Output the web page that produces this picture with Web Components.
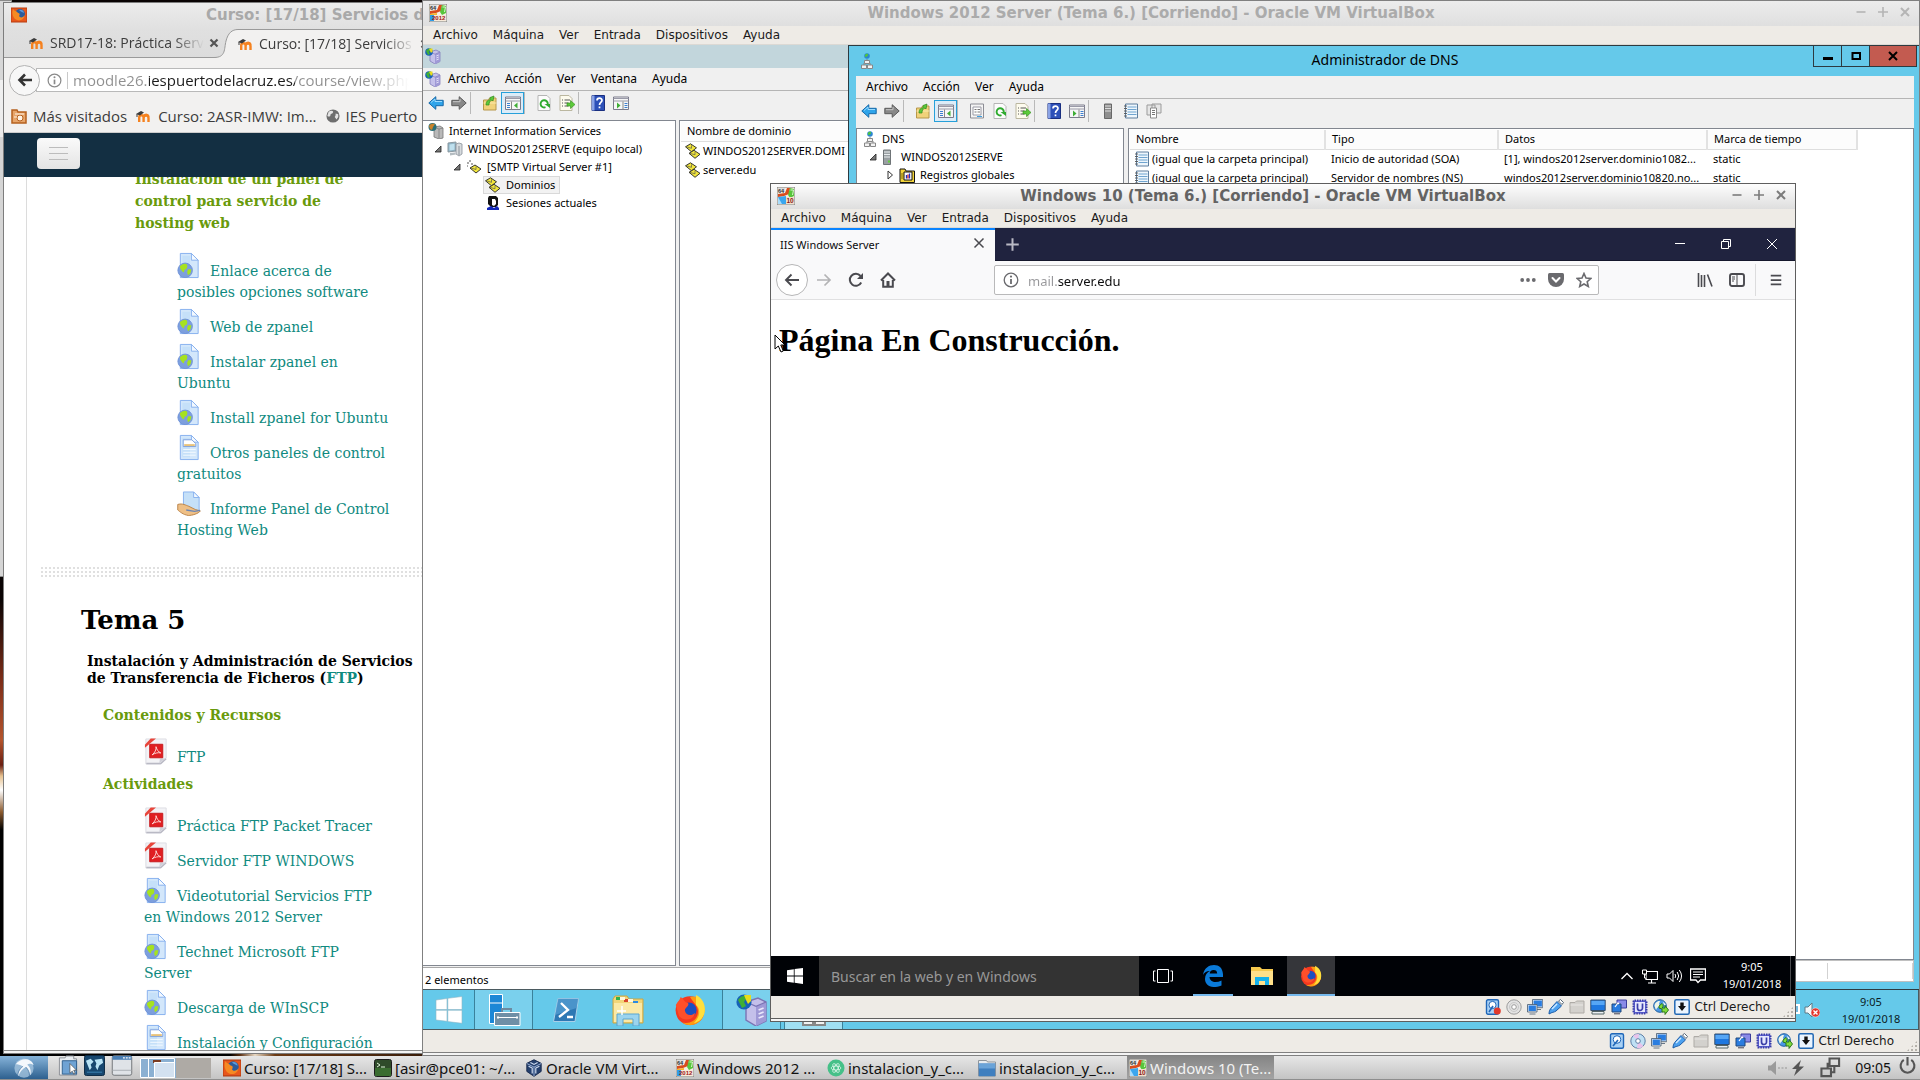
<!DOCTYPE html>
<html lang="es">
<head>
<meta charset="utf-8">
<title>Escritorio</title>
<style>
html,body{margin:0;height:100%;overflow:hidden;background:#000}
</style>
</head>
<body>
<host-desktop></host-desktop>
<script>
const BASE = `
*{box-sizing:border-box}
button{font:inherit;color:inherit;background:none;border:0;padding:0;margin:0;white-space:nowrap;text-align:left;flex:none}
input{font:inherit;border:0;padding:0;margin:0;background:none;outline:0;min-width:0}
ul{list-style:none;margin:0;padding:0}
svg{display:block}
`;
const define = (name, css, render) => customElements.define(name, class extends HTMLElement {
  connectedCallback() {
    if (this.shadowRoot) return;
    this.attachShadow({ mode: 'open' }).innerHTML = `<style>${BASE}${css}</style>${typeof render === 'function' ? render(this) : render}`;
  }
});

/* ---------- icons ---------- */
const doc = `<path d="M3 1.500h11.500l7 7V26.500H3z" fill="#d3e7fb" stroke="#86b0ee"/><path d="M5 4h8v20H5z" fill="#bcdcf8" opacity=".6"/><path d="M14.500 1.500v7h7z" fill="#f3f9ff" stroke="#86b0ee"/>`;
const envelope = (x, y) => `<g transform="translate(${x} ${y})"><path d="M0 3L5 0l6 4-5 4z" fill="#f2e63c" stroke="#222" stroke-width=".9"/><path d="M1 3l5 1.500 0-3" fill="none" stroke="#555" stroke-width=".7"/></g>`;
const firefoxNew = `<circle cx="8" cy="8.300" r="7.200" fill="#f5381f"/><path d="M8 1.500c5-1.500 7.500 3 7.200 7A7.200 7.200 0 0 1 4 14.300c5 1 8-2 8-5.500 0-3-2-4-4-7.300z" fill="#ff9a12"/><path d="M11 .5c4 2 5 6 4.200 9.300C14 13 12 14 10 14.500c3-3 3.500-7 1-9z" fill="#ffdf3d"/><circle cx="7.500" cy="8" r="3.800" fill="#1c4fc0"/><path d="M.9 5.500C2 3.500 3 3 3.300 1.500 5 2.500 5 4 7 4.500 8 6 5 7 5.500 8.500 6 11 9 11 10.500 9.500 10 13 5 14 2.500 11z" fill="#ff4f2a"/>`;
const vbBase = `<path d="M0 0h18v18H0z" fill="#f4efe4" stroke="#777"/><path d="M10 1l3 0-1 6-5 2-6 1V7l7-1z" fill="#d94c1e"/><path d="M13 1l4 1v7l-4 2-2-3z" fill="#58c53c"/><path d="M13.500 3l3 0-1 5" fill="none" stroke="#d9f5cf"/><path d="M1 1h7v4H1z" fill="#ddd"/><text x="1" y="5.500" font-size="5.500" font-weight="700" font-family="Liberation Sans" fill="#333">64</text>`;
const ICONS = {
  globeDoc: ['0 0 24 28', doc + `<circle cx="8" cy="19" r="7.500" fill="#7d9fdd" stroke="#6f93d8"/><path d="M5 13c4-2 6 0 5 3s-3 1-3 4-3-1-4-3 0-3 2-4zM11 18l3.500 0-1 4-2.500 2-1-3z" fill="#a6e21f"/>`],
  pageDoc: ['0 0 24 28', doc + `<path d="M6 6h9l4 4v3H6z" fill="#fff" stroke="#7d9fdd"/><path d="M7 11.500h11" stroke="#e8c27a" stroke-width="2"/><path d="M6 16h13M6 19h13M6 22h13" stroke="#f4faff"/>`],
  handDoc: ['0 0 26 28', `<path d="M7 1.500h11l6 6V22H7z" fill="#c5e0f8" stroke="#86b0ee"/><path d="M18 1.500v6h6z" fill="#f3f9ff" stroke="#86b0ee"/><path d="M.8 15c5-1.500 9 1 12 2l7 3.500 5.500 1.500c-2 3-9 5-13 5-6-1-9-4-11.500-6z" fill="#eebf86" stroke="#b98145"/><path d="M10 21l9 1.500 6-1" fill="none" stroke="#6b86b5" stroke-width="1.500"/>`],
  pdf: ['0 0 24 28', `<path d="M1.500 1h21v20l-6 6h-15z" fill="#f3f3f6" stroke="#dcdce2"/><path d="M2 26.500h15l5.500-5" fill="none" stroke="#b9b9c4" stroke-width="1.500"/><path d="M22 21l-6 .5-.5 5z" fill="#cfcfd8"/><path d="M.5 10V7L6.500.5H12z" fill="#e8453a"/><path d="M5.500 6.500h13.500v14H5.500z" fill="#e01f22" stroke="#c7191c"/><path d="M8 17.500c3-2.500 4.500-5.500 4-8.500 1 3.500 2.500 5.500 5 6.500-3-.6-6 0-9 2z" fill="none" stroke="#ffe9e6" stroke-width=".9"/>`],
  ffOld: ['0 0 16 16', `<path d="M0 1h16v14H0z" fill="#e8571c"/><path d="M0 1h16v14H0z" fill="none" stroke="#b83c10"/><circle cx="9" cy="7" r="5" fill="#2c5c9c"/><path d="M2 2c1 2 4 2 5 4 2 0 2 2 1 3 1 2 4 2 6-1-1 5-6 7-10 4C1 9 1 5 2 2z" fill="#f58a23"/><path d="M8 3c3-1 5 1 5 3-1-1-3-1-5-3z" fill="#5d9ad8"/>`],
  moodle: ['0 0 16 12', `<path d="M3.200 12V7.500a2.200 2.200 0 0 1 4.400 0V12M7.600 8a2.200 2.200 0 0 1 4.900 0v4" fill="none" stroke="#f58220" stroke-width="2.400"/><path d="M7.600 6.500a2.600 2.600 0 0 1 5 0" fill="none" stroke="#f58220" stroke-width="2.200"/><path d="M0 4l5-3 3 1.500-4 3z" fill="#3b3b3b"/><path d="M1 4v3" stroke="#3b3b3b"/>`],
  folderFf: ['0 0 16 16', `<path d="M1 2h5l1 2h8v11H1z" fill="#e7a56a" stroke="#b5601e" stroke-width="1.500"/><circle cx="9" cy="10" r="3" fill="#fff3e4" stroke="#b5601e"/><path d="M4 6h9M3 9h3" stroke="#fff3e4"/>`],
  globeGray: ['0 0 16 16', `<circle cx="8" cy="8" r="7.500" fill="#6e6e6e"/><path d="M3 3c3-2 6-1 5 1S5 5 5 7 3 9 1.500 8zM11 5l3 1 0 3-2 3-2-3 1-2z" fill="#e4e4e4"/>`],
  info: ['0 0 16 16', `<circle cx="8" cy="8" r="6.800" fill="none" stroke="currentColor" stroke-width="1.300"/><path d="M8 7v5" stroke="currentColor" stroke-width="1.800"/><circle cx="8" cy="4.600" r="1.100" fill="currentColor"/>`],
  xBold: ['0 0 10 10', `<path d="M1.500 1.500l7 7M8.500 1.500l-7 7" stroke="currentColor" stroke-width="2.200"/>`],
  backBold: ['0 0 16 16', `<path d="M15 8H3M8 2.500L2.500 8 8 13.500" fill="none" stroke="#333" stroke-width="2.600"/>`],
  vb2012: ['0 0 18 18', vbBase + `<path d="M1 10l7-1v3H1z" fill="#f7b52a"/><path d="M1 11h4v6H1z" fill="#2f9de8"/><path d="M5 11h12v6H5z" fill="#f7ead9"/><text x="3" y="16" font-size="6" font-weight="700" font-family="Liberation Sans" fill="#a01818">2012</text>`],
  vb10: ['0 0 18 18', vbBase + `<path d="M1 10l8-1v8H1z" fill="#3aa6ee"/><path d="M1 10l4 7H1z" fill="#a9dcfb"/><path d="M9 10h8v7H9z" fill="#f3dfc9"/><text x="9.500" y="16" font-size="6.500" font-weight="700" font-family="Liberation Sans" fill="#8a1c1c">10</text>`],
  iis: ['0 0 16 16', `<path d="M5 4l6-2 4 2v9.500L10 16l-5-3z" fill="#c4c0ea" stroke="#7a74b4" stroke-width=".7"/><path d="M10 6.200l5-2v9.300L10 16z" fill="#9f99d6"/><path d="M5 4l5 2.200 5-2.200" stroke="#7a74b4" stroke-width=".6" fill="none"/><path d="M11.300 8l2.500-1M11.300 10l2.500-1M11.300 12l2.500-1" stroke="#e9e7fb" stroke-width=".9"/><circle cx="4" cy="4" r="3.800" fill="#1762b8"/><path d="M1 3c2-3 4-2 5-2L4 4l1 2-2 1z" fill="#3fae35"/><path d="M4 .5h3.500v3L6 5 5 3z" fill="#e8dc1c"/>`],
  iisRoot: ['0 0 16 16', `<path d="M6 4l6-1 3 2v10l-4 1-5-2z" fill="#b9b9b9" stroke="#777" stroke-width=".8"/><path d="M11 6v9.500M11 6l4-1M11 6L6 4" stroke="#777" fill="none" stroke-width=".7"/><circle cx="4.500" cy="4" r="4" fill="#2b6f77"/><path d="M1 3c2-3 4-2 6-2L5 4l-1 3-2-1z" fill="#c9832b"/>`],
  computer: ['0 0 16 16', `<path d="M1 2l8-1v9l-8 1z" fill="#8fb4c6" stroke="#8a98a0"/><path d="M2.500 3.500l5-.7v6l-5 .7z" fill="#bfe0ee"/><path d="M9 3l3-1 3 1v10l-3 2-3-2z" fill="#d7dbde" stroke="#899199" stroke-width=".8"/><path d="M12 5v9" stroke="#899199"/><path d="M3 12l5-.5 1 2-6 1z" fill="#b4bcc1"/>`],
  smtp: ['0 0 16 16', envelope(4, 6) + `<path d="M1 4h2M3 2h2M5 5h2M1 7h1" stroke="#555"/>`],
  domains: ['0 0 16 16', envelope(0.5, 0.8) + envelope(4, 7.300)],
  user: ['0 0 14 16', `<path d="M3 1h7l2 2v7l-2 2H5L2 9V3z" fill="#111"/><path d="M6 4h3l1 2v3l-2 2-2-1z" fill="#fff"/><path d="M1 13l4-2 3 2 3-2 2 2v2H1z" fill="#1227b8"/>`],
  open: ['0 0 8 8', `<path d="M7 1v6H1z" fill="#777" stroke="#222" stroke-width=".8"/>`],
  closed: ['0 0 8 10', `<path d="M2 1l4.500 4L2 9z" fill="#fff" stroke="#333"/>`],
  left: ['0 0 16 16', `<path d="M.8 8l7-6.300v3.600h7.400v5.400H7.800v3.600z" fill="#2fa4ea" stroke="#1668a8"/><path d="M3 7.500l4-3.500v2.500h7" fill="none" stroke="#9adbff"/>`],
  right: ['0 0 16 16', `<path d="M15.200 8l-7-6.300v3.600H.8v5.400h7.400v3.600z" fill="#888" stroke="#5a5a5a"/><path d="M2 6.700h7V4" fill="none" stroke="#c5c5c5"/>`],
  folderUp: ['0 0 16 16', `<path d="M1.500 5h5l1-2H14v12H1.500z" fill="#f1d27a" stroke="#b7974a"/><path d="M1.500 8h13" stroke="#fbe9ae"/><path d="M4 10c0-4 2-5 4-5V2.500L12 1l-1 5-1-1c-2 1-3 2-3 5z" fill="#5cc93a" stroke="#318a1c" stroke-width=".7"/>`],
  treePane: ['0 0 16 16', `<path d="M.5 2h15v12.500H.5z" fill="#f6f6f6" stroke="#7b7b8b"/><path d="M.5 3.500h15M.5 6h15" stroke="#9a9aa8"/><path d="M2 8.500h3M2 10.500h3M2 12.500h3" stroke="#3c7fd0"/><path d="M6.500 6.500v8" stroke="#888"/><path d="M12.500 7.500v6L9 10.500z" fill="#3fae35"/>`],
  actPane: ['0 0 16 16', `<path d="M.5 2h15v12.500H.5z" fill="#f6f6f6" stroke="#7b7b8b"/><path d="M.5 3.500h15M.5 6h15" stroke="#9a9aa8"/><path d="M11.500 8.500h3M11.500 10.500h3M11.500 12.500h3" stroke="#3c7fd0"/><path d="M10 6.500v8" stroke="#888"/><path d="M4 7.500v6l3.500-3z" fill="#3fae35"/>`],
  refresh: ['0 0 16 16', `<path d="M2 .5h9l3 3v12H2z" fill="#fcfcfc" stroke="#b5b5b5"/><path d="M9.500 12.200A3.600 3.600 0 1 1 11.800 9" fill="none" stroke="#2eaa2e" stroke-width="1.900"/><path d="M8.500 9h5.500v4z" fill="#2eaa2e"/>`],
  exportList: ['0 0 16 16', `<path d="M1 .5h9l3 3v12H1z" fill="#fdfbee" stroke="#bbb7a0"/><path d="M3 5h1M3 8h1M3 11h1M5.500 5H11M5.500 8h4M5.500 11h4" stroke="#555"/><path d="M8 8h3.500V5.500L16 9.500l-4.500 4V11H8z" fill="#5cc93a" stroke="#318a1c" stroke-width=".6"/>`],
  help: ['0 0 16 16', `<path d="M2 .5h12.500v15H2z" fill="#2d50b8" stroke="#1a2f80"/><path d="M2 .5h2.500v15H2z" fill="#8aa3e6"/><path d="M7 5.500c0-3 5-3 5-.3C12 7.500 9.500 7.500 9.500 10M9.500 11.500v1.800" fill="none" stroke="#fff" stroke-width="1.700"/>`],
  props: ['0 0 16 16', `<path d="M1.500 1h13v14h-13z" fill="#f4f4f4" stroke="#8d8d95"/><path d="M4 4h8v8H4z" fill="#fff" stroke="#9a9aa5"/><path d="M5.500 6.500h2M8.500 6.500h2.500M5.500 9h2M8.500 9H11" stroke="#777"/><path d="M8 13.500h5" stroke="#3c9fe0"/>`],
  server: ['0 0 10 16', `<path d="M1.500 1h7v14.500h-7z" fill="#9aa0a3" stroke="#6f7477"/><path d="M2 3h6M2 5.500h6M2 8h6" stroke="#e8ecee"/><path d="M6 12.500h2" stroke="#63d13c" stroke-width="2"/>`],
  serverGray: ['0 0 10 16', `<path d="M1.500 1h7v14.500h-7z" fill="#8e8e8e" stroke="#686868"/><path d="M2 3h6M2 5.500h6M2 8h6" stroke="#ddd"/>`],
  record: ['0 0 16 16', `<path d="M2.500 1h12v14h-12z" fill="#eef6fc" stroke="#5f7f9f"/><path d="M4.500 4h9M4.500 6.500h9M4.500 9h9M4.500 11.500h9" stroke="#6fa4d0"/><path d="M1 3h3M1 5.500h3M1 8h3M1 10.500h3M1 13h3" stroke="#555" stroke-width=".9"/>`],
  copies: ['0 0 16 16', `<path d="M1 2h8v10H1zM6 1h9v9H6z" fill="#e6e6e6" stroke="#9b9b9b"/><path d="M4.500 5h6v10h-6z" fill="#fff" stroke="#8b8b8b"/><path d="M6 7.500h3M6 9.500h3M6 11.500h3" stroke="#777"/>`],
  dns: ['0 0 12 16', `<circle cx="6" cy="3" r="2.800" fill="#2c86d0"/><path d="M4 2c2-2 3-1 3 0S5 4 4 4z" fill="#4fc63a"/><path d="M6 6v2M3 12V10h6v2" stroke="#888" fill="none"/><path d="M3.500 7.500h5v3h-5zM.5 12h5v3.500h-5zM6.500 12h5v3.500h-5z" fill="#f2f2f2" stroke="#888"/>`],
  logs: ['0 0 16 16', `<path d="M1 2h5l1 2h8.500v11.500H1z" fill="#f2d33a" stroke="#111"/><path d="M5 5h8v8H5z" fill="#fff" stroke="#111"/><path d="M7.500 11.500V8M10.500 11.500V6.500" stroke="#2030c0" stroke-width="1.300"/><path d="M9 11.500V7.500" stroke="#c02020" stroke-width="1.300"/><path d="M2 7h3M2 9h3M2 11h3" stroke="#7b6a10"/>`],
  minus: ['0 0 12 12', `<path d="M1.500 6h9" stroke="currentColor" stroke-width="1.600"/>`],
  plus: ['0 0 12 12', `<path d="M1 6h10M6 1v10" stroke="currentColor" stroke-width="1.600"/>`],
  cross: ['0 0 12 12', `<path d="M2 2l8 8M10 2l-8 8" stroke="currentColor" stroke-width="2"/>`],
  crossThin: ['0 0 12 12', `<path d="M1 1l10 10M11 1L1 11" stroke="currentColor" stroke-width="1"/>`],
  crossMid: ['0 0 12 12', `<path d="M1.500 1.500l9 9M10.500 1.500l-9 9" stroke="currentColor" stroke-width="1.500"/>`],
  lineThin: ['0 0 12 12', `<path d="M1 5.500h10" stroke="currentColor"/>`],
  restore: ['0 0 12 12', `<path d="M1.500 3.500h7v7h-7zM3.500 3.500v-2h7v7h-2" fill="none" stroke="currentColor"/>`],
  wMin: ['0 0 12 12', `<path d="M1 8.500h10" stroke="#000" stroke-width="3"/>`],
  wMax: ['0 0 12 12', `<path d="M2.500 3h7.500v6H2.500z" fill="none" stroke="#000" stroke-width="2"/>`],
  fxBack: ['0 0 16 16', `<path d="M15 8H2.500M7.500 2.500L2 8l5.500 5.500" fill="none" stroke="currentColor" stroke-width="1.900"/>`],
  fxFwd: ['0 0 16 16', `<path d="M1 8h12.500M8.500 2.500L14 8l-5.500 5.500" fill="none" stroke="currentColor" stroke-width="1.700"/>`],
  fxReload: ['0 0 16 16', `<path d="M13.200 10.500A6 6 0 1 1 12.500 4" fill="none" stroke="currentColor" stroke-width="2"/><path d="M15 1v6H9z" fill="currentColor"/>`],
  fxHome: ['0 0 16 16', `<path d="M1 8.500L8 1.500l7 7M3.200 8v6.800h9.600V8" fill="none" stroke="currentColor" stroke-width="2"/><path d="M6.500 9h3v6h-3z" fill="currentColor"/>`],
  dots: ['0 0 16 16', `<circle cx="2.200" cy="8" r="1.900" fill="currentColor"/><circle cx="8" cy="8" r="1.900" fill="currentColor"/><circle cx="13.800" cy="8" r="1.900" fill="currentColor"/>`],
  pocket: ['0 0 16 16', `<path d="M1.500 1h13q1.500 0 1.500 1.500V7A8 8 0 0 1 0 7V2.500Q0 1 1.500 1z" fill="currentColor"/><path d="M4.500 6L8 9.500 11.500 6" fill="none" stroke="#fff" stroke-width="2" stroke-linecap="round"/>`],
  star: ['0 0 16 16', `<path d="M8 1.500l2 4.500 4.800.5-3.600 3.200 1.100 4.800L8 12l-4.300 2.500 1.100-4.800L1.200 6.500 6 6z" fill="none" stroke="currentColor" stroke-width="1.600"/>`],
  library: ['0 0 16 16', `<path d="M1.500 1v14M4.500 3v12M7.500 3v12M10.500 2.500l4.500 12" fill="none" stroke="currentColor" stroke-width="1.600"/>`],
  sidebar: ['0 0 16 16', `<rect x="1" y="2" width="14" height="12" rx="2" fill="none" stroke="currentColor" stroke-width="1.900"/><path d="M8 2v12" stroke="currentColor"/><path d="M3 5h3M3 7h3M3 9h2" stroke="currentColor"/>`],
  burger: ['0 0 16 16', `<path d="M2 3h12M2 8h12M2 13h12" stroke="currentColor" stroke-width="2"/>`],
  winLogo: ['0 0 16 16', `<path d="M0 2.200L6.800 1.200v6.300H0zM7.600 1.100L16 0v7.500H7.600zM0 8.400h6.800v6.400L0 13.800zM7.600 8.400H16V16l-8.400-1.200z" fill="#fff"/>`],
  winLogoThin: ['0 0 28 28', `<path d="M1 4l11-1.500v11H1zM12.800 2.300L27 .5v13H12.800zM1 14.300h11v11L1 24zM12.800 14.300H27v13L12.800 25.600z" fill="#fff" stroke="#8fb5c4" stroke-width=".6"/>`],
  serverMgr: ['0 0 34 34', `<path d="M2.500 1.500h13v29h-13z" fill="#1c87d6" stroke="#fff"/><path d="M2.500 10h13" stroke="#fff"/><path d="M15 19v-3h9v3" fill="none" stroke="#6d8aa0" stroke-width="2"/><path d="M7.500 19.500h25.500v13H7.500z" fill="#6f8fa6" stroke="#fff"/><path d="M10 24.500h21M11 23v3M30 23v3" stroke="#fff"/>`],
  powershell: ['0 0 30 28', `<path d="M7 2.500h20.500L24 25.500H2.500z" fill="#2d78b4" stroke="#a9cfe8"/><path d="M7 2.500h20.500L25.500 12 4 19z" fill="#5ea6d8" opacity=".6"/><path d="M10 7l7 7-9 7M16 21h6" fill="none" stroke="#fff" stroke-width="2.300"/>`],
  explorerOld: ['0 0 32 32', `<path d="M1 5l2-3h12l2 3h14v24H1z" fill="#f2d679" stroke="#caa545"/><path d="M4 3h4v3H4z" fill="#2fb14a"/><path d="M12 5h4v3h-4z" fill="#d8472b"/><path d="M21 7h5v3h-5z" fill="#2d8be0"/><path d="M8 3h5v3H8zM16 5h5v3h-5z" fill="#fff7dc"/><path d="M2 9h28v19H2z" fill="#fbe9a6"/><path d="M5 20h22v12h-6v-7H11v7H5z" fill="#9bd4ee" stroke="#5aa5cf"/><path d="M10 12v9M5 17h9" stroke="#fff" stroke-width="1.500"/>`],
  ffNew: ['0 0 16 16', firefoxNew],
  explorer10: ['0 0 22 18', `<path d="M0 0h9l2 2h11v16H0z" fill="#f6c94e"/><path d="M0 4h22v14H0z" fill="#ffe08a"/><path d="M4 10h14v8h-4v-4H8v4H4z" fill="#14b1ec"/>`],
  edge: ['0 0 20 22', `<path d="M0 10C1 3 6 0 11 0c6 0 9.500 4 9 12H6.500c0 3 3 5 6 5 2 0 4-.5 6-1.500v5c-3 1.300-5 1.500-8 1.500C5 22 2 18 2 14c0-4 2-6.500 5-8-4 0-6 2-7 4zM6.700 8.500h7.500C14 6 13 5 10.700 5 8 5 7 6.500 6.700 8.500z" fill="#0a7ad8"/>`],
  taskView: ['0 0 20 14', `<path d="M4.500.5h11v13h-11zM2.500 2H.5v10h2M17.500 2h2v10h-2" fill="none" stroke="#fff"/>`],
  caret: ['0 0 14 14', `<path d="M1.500 10L7 4.500 12.500 10" fill="none" stroke="#fff" stroke-width="1.300"/>`],
  netTray: ['0 0 16 16', `<path d="M4 3.500h11.500v8H4zM9.500 12v2.500M6 15h8" fill="none" stroke="#fff" stroke-width="1.200"/><path d="M.5 2h4v4h-4zM2.500 6v4h2" fill="#000" stroke="#fff"/>`],
  volTray: ['0 0 16 16', `<path d="M1 6h2.500L7 2.500v11L3.500 10H1z" fill="none" stroke="#fff"/><path d="M9 6q1.500 2 0 4M11.200 4q3 4 0 8M13.300 2q4.500 6 0 12" fill="none" stroke="#fff"/>`],
  notes: ['0 0 16 16', `<path d="M.5 1h15v11h-5L8 14.500 6 12H.5z" fill="none" stroke="#fff" stroke-width="1.300"/><path d="M3 4h10M3 6.500h10M3 9h7" stroke="#fff"/>`],
  volOff: ['0 0 16 16', `<path d="M1 5h3l4-4v14l-4-4H1z" fill="#f2f8fa" stroke="#5f7b86"/><circle cx="11.500" cy="10.500" r="4.500" fill="#e5352c" stroke="#fff" stroke-width=".5"/><path d="M9.500 8.500l4 4M13.500 8.500l-4 4" stroke="#fff" stroke-width="1.400"/>`],
  netOld: ['0 0 16 16', `<path d="M2 3h13v8H2z" fill="#74b9dc" stroke="#fff" stroke-width="2"/><path d="M5 14h7" stroke="#fff" stroke-width="2"/>`],
  hdd: ['0 0 16 16', `<rect x="1.500" y=".8" width="13" height="14.400" rx="1.500" fill="#a9d1f5" stroke="#1f66b8" stroke-width="1.400"/><circle cx="8" cy="6.500" r="3.800" fill="#fff" stroke="#1f66b8"/><path d="M4 13l5-6" stroke="#1f66b8" stroke-width="1.600"/>`],
  hddBusy: ['0 0 16 16', `<rect x="1.500" y=".8" width="12" height="14.400" rx="1.500" fill="#a9d1f5" stroke="#1f66b8" stroke-width="1.400"/><circle cx="7.500" cy="6" r="3.600" fill="#fff" stroke="#1f66b8"/><path d="M4 13l4-6" stroke="#1f66b8" stroke-width="1.600"/><circle cx="12.300" cy="12" r="3.500" fill="#e0392b"/>`],
  cd: ['0 0 16 16', `<circle cx="8" cy="8" r="7.200" fill="#bfe0f4" stroke="#5d7fa6"/><path d="M8 8L3 2.800A7 7 0 0 1 9 1zM8 8l5.500 5A7 7 0 0 1 7 15z" fill="#e9c3ea"/><circle cx="8" cy="8" r="2.300" fill="#fff" stroke="#5d7fa6"/>`],
  cdGray: ['0 0 16 16', `<circle cx="8" cy="8" r="7.200" fill="#e3e3e3" stroke="#9c9c9c"/><circle cx="8" cy="8" r="4.500" fill="none" stroke="#c8c8c8"/><circle cx="8" cy="8" r="2.300" fill="#fff" stroke="#9c9c9c"/>`],
  nets: ['0 0 16 16', `<path d="M6 1h9.500v7H6z" fill="#2a7de0" stroke="#e3e9f0" stroke-width="1.200"/><path d="M5.500.5h10.200v8.200H5.500zM9 10.500h5" fill="none" stroke="#44586e" stroke-width=".8"/><path d="M1 6h8.500v6.500H1z" fill="#2a7de0" stroke="#e3e9f0" stroke-width="1.200"/><path d="M.5 5.500h9.500v7.500H.5zM2.500 15h6" fill="none" stroke="#44586e" stroke-width=".8"/>`],
  usb: ['0 0 16 16', `<path d="M10.500 2l2-1.500 3 3-1.500 2z" fill="#fff" stroke="#567"/><path d="M1 15c0-3 1-5 3-7l5-5.500 4.500 4.500L8 12c-2 1.500-4 1-7 3z" fill="#4da1ef" stroke="#1c5ca8"/><path d="M4 10l5-5" stroke="#d0e9ff" stroke-width="1.500"/>`],
  sharedOff: ['0 0 16 16', `<path d="M1 5V3.500h5l1.500-1.500H15V14H1z" fill="#d3d1cd" stroke="#aeaba6"/><path d="M1.500 6H14" stroke="#e9e7e4"/>`],
  display: ['0 0 16 16', `<path d="M.8 1h14.400v10.500H.8z" fill="#1f78e0" stroke="#37506e"/><path d="M1.500 2h13v4h-13z" fill="#56a6f5"/><path d="M2 12.500h12v2.500H2z" fill="#eceff3" stroke="#566"/>`],
  screens: ['0 0 16 16', `<path d="M6 1h9.500v8H6z" fill="#8a8be8" stroke="#3c3d9a"/><path d="M1 5h9v8H1z" fill="#2a7de0" stroke="#23497a"/><path d="M4 8l3-4 1 1" stroke="#fff" fill="none" stroke-width="1.200"/><path d="M3 14.800h6" stroke="#445"/>`],
  cpu: ['0 0 16 16', `<rect x="1.500" y="1.500" width="13" height="13" rx="1" fill="#5e63d6" stroke="#3a3ea8" stroke-dasharray="1.500 1" stroke-width="2"/><rect x="3" y="3" width="10" height="10" fill="#e6e8fd"/><path d="M5.500 4.500V9a2.500 2.500 0 0 0 5 0V4.500" fill="none" stroke="#3a3ea8" stroke-width="1.700"/>`],
  mouseInt: ['0 0 16 16', `<circle cx="7" cy="7" r="6.300" fill="#4a97e4" stroke="#23609f"/><path d="M1.500 7c0-3 3-5.500 5.500-5L6 5l1 2-3 2-1 2z" fill="#f0f5e8"/><path d="M10 2.500l3 3-2 1z" fill="#e8f3fc"/><path d="M6 9V7l3-2.500 1 1V8l-1 1 3 0V6.500l3.500 4.500-3.500 4.500V13H9V10z" fill="#7fdc3c" stroke="#226b14" stroke-width=".9"/>`],
  capture: ['0 0 16 16', `<rect x=".8" y=".8" width="14.400" height="14.400" rx="1.500" fill="#eaf4fe" stroke="#2268b4" stroke-width="1.500"/><path d="M6.300 3.500h3.400V7H12l-4 5-4-5h2.300z" fill="#111"/>`],
  lubuntu: ['0 0 24 24', `<circle cx="12" cy="12" r="10.500" fill="#a9c8e2" opacity=".75"/><path d="M3 8C7 3 14 1 19 4c2 1.500 3 3 3.500 5-3-2-5-2-7-.5C19 11 20 15 19 20c-1-4-3-7-5-9-4 2-7 6-8 10-1-3 1-8 4.500-11C8 8.500 5 8 3 8z" fill="#f4f8fc"/><path d="M11 10c-4 3-6 7-6 11M14 11c3 3 4 6 4 10" stroke="#4a79a6" stroke-width=".8" fill="none"/>`],
  fileMan: ['0 0 20 22', `<path d="M1 3h6l1-2h8v3h3v17H1z" fill="#e9edf1" stroke="#8a8f95"/><path d="M4 6h15v14H4z" fill="#6fa3d4" stroke="#2f5f8f"/><path d="M12 9v10l2.500-2 1.500 3 1.500-1-1.500-3h3z" fill="#fff" stroke="#444" stroke-width=".7"/>`],
  web: ['0 0 22 22', `<rect x=".5" y=".5" width="21" height="21" rx="2" fill="#17476f" stroke="#0c2942"/><path d="M2 6l5-2 3 3-3 3 1 3-2 3-2-5zM11 5l8-1 1 4-4 3-2 5-2-4 1-3z" fill="#b9e3f5"/><path d="M3 18h16" stroke="#3f86b8"/>`],
  deskIcon: ['0 0 22 22', `<rect x=".8" y=".8" width="20.400" height="20.400" rx="2" fill="#dfe3e7" stroke="#6e7276"/><path d="M1 1h20v4H1z" fill="#4a7fb5"/><path d="M12 3h2M15 3h2M18 3h2" stroke="#fff" stroke-width="1.500"/><path d="M1 16h20" stroke="#a9adb1"/>`],
  term: ['0 0 18 18', `<rect x=".5" y=".5" width="17" height="17" rx="2" fill="#2f4a2a" stroke="#1c1c1c"/><path d="M1 9h16v8H1z" fill="#3f7a33" opacity=".7"/><path d="M3 4l3 2-3 2M7 8h4" fill="none" stroke="#dff5d8"/>`],
  vbox: ['0 0 18 20', `<path d="M9 .8l8 4v9l-8 5.500-8-5.500v-9z" fill="#24406e" stroke="#15264a"/><path d="M9 9v10M1 5l8 4 8-4" stroke="#9fb6dd" fill="none"/><path d="M3 8l4 2v6M15 8l-4 2v6M5 4l4 2 4-2" stroke="#d2def2" fill="none" stroke-width="1.300"/>`],
  atom: ['0 0 18 18', `<circle cx="9" cy="9" r="8.500" fill="#45c088"/><g fill="none" stroke="#d8f5e7" stroke-width=".8"><ellipse cx="9" cy="9" rx="5" ry="2"/><ellipse cx="9" cy="9" rx="5" ry="2" transform="rotate(60 9 9)"/><ellipse cx="9" cy="9" rx="5" ry="2" transform="rotate(120 9 9)"/></g>`],
  folderBlue: ['0 0 18 18', `<path d="M.5 1.500h8l1 1.500h8v14H.5z" fill="#e8ecf0" stroke="#8f959b"/><path d="M.8 4.500h16.400v12.700H.8z" fill="#3f7fbf"/><path d="M.8 4.500h16.400v5H.8z" fill="#6aa3d8"/>`],
  volHost: ['0 0 20 14', `<path d="M0 4.500h3L8 0v14L3 9.500H0z" fill="#9a9a9a"/><path d="M10 7h2M13.500 7h2M17 7h2" stroke="#aaa" stroke-width="1.500"/>`],
  bolt: ['0 0 12 16', `<path d="M9 0L0 9h4.500L2 16l10-9.500H7z" fill="#555"/>`],
  netHost: ['0 0 22 22', `<path d="M10 1.500h10v8H10zM1.500 12h10v8h-10zM15 10v6h-3M8 12V6" fill="none" stroke="#555" stroke-width="2.200"/>`],
  power: ['0 0 16 16', `<path d="M4.500 2.800a6.500 6.500 0 1 0 7 0M8 0v8" fill="none" stroke="#555" stroke-width="2"/>`],
  cursor: ['0 0 12 19', `<path d="M1 1v14l3.300-3L7 18l2.300-1-2.500-6H11z" fill="#fff" stroke="#000"/>`]
};
define('ui-icon', `:host{display:inline-block;flex:none;line-height:0}`, el => {
  const [vb, body] = ICONS[el.getAttribute('name')];
  const w = el.getAttribute('w') || 16, h = el.getAttribute('h') || w;
  return `<svg width="${w}" height="${h}" viewBox="${vb}" aria-hidden="true">${body}</svg>`;
});

/* ---------- shared pieces ---------- */
define('menu-bar', `
:host{display:flex;align-items:center;gap:var(--menu-gap,15px);flex:none;white-space:nowrap}`,
  el => `<slot></slot>` + el.getAttribute('items').split(',').map(t => `<button>${t}</button>`).join(''));

define('vm-status', `
:host{display:flex;align-items:center;justify-content:flex-end;gap:5px;height:22px;flex:none;background:#eeebe6;padding-right:1px;font:12px/16px "DejaVu Sans",sans-serif;color:#1a1a1a}
.grip{align-self:flex-end;width:12px;height:12px;margin-left:7px;background:radial-gradient(circle,#b5b1aa 1px,transparent 1px) 0 0/4px 4px;clip-path:polygon(100% 0,100% 100%,0 100%)}`,
  el => el.getAttribute('icons').split(' ').map(n => `<ui-icon name="${n}"></ui-icon>`).join('') + `<span>Ctrl Derecho</span><span class="grip"></span>`);

/* Openbox-framed VirtualBox window */
define('vm-window', `
:host{display:flex;flex-direction:column;border:1px solid var(--edge,#808080);background:#fff;overflow:hidden}
header{display:flex;align-items:center;height:25px;flex:none;padding:0 8px 2px 6px;background:linear-gradient(#ececec,#dfdfdf);color:var(--title,#ababab)}
:host([active]) header{background:linear-gradient(#fdfdfd,#dedede)}
h2{flex:1;margin:0;text-align:center;font:bold 15px/20px "DejaVu Sans",sans-serif;white-space:nowrap}
.ctl{display:flex;gap:10px;color:var(--ctl,#b5b5b5)}
menu-bar{height:19px;background:#eeebe6;border-bottom:1px solid #dcd9d4;padding-left:10px;font:12px/16px "DejaVu Sans",sans-serif;color:#1a1a1a}
main{flex:1;min-height:0;display:flex;flex-direction:column;position:relative}
footer{height:3px;flex:none;border-top:1px solid var(--edge,#808080);background:#f4f4f4}`,
  el => `<header><ui-icon name="${el.getAttribute('icon')}" w="18"></ui-icon><h2>${el.getAttribute('heading')}</h2>
<div class="ctl"><button aria-label="Minimizar"><ui-icon name="minus" w="12"></ui-icon></button><button aria-label="Maximizar"><ui-icon name="plus" w="12"></ui-icon></button><button aria-label="Cerrar"><ui-icon name="cross" w="12"></ui-icon></button></div></header>
<menu-bar items="Archivo,Máquina,Ver,Entrada,Dispositivos,Ayuda"></menu-bar><main><slot></slot></main><vm-status icons="${el.getAttribute('status')}"></vm-status><footer></footer>`);

/* MMC toolbar: icon names, "|" a separator, "*" a pressed button */
define('mmc-toolbar', `
:host{display:flex;align-items:center;flex:none;height:29px;padding:0 0 5px 1px;background:#f0f0f0}
button{width:23px;height:22px;display:flex;align-items:center;justify-content:center}
button.on{border:1px solid #26a0da;background:#dcecf8}
i{width:1px;height:22px;background:#b9b9b9;margin-right:7px}`,
  el => el.getAttribute('tools').split(' ').map(t => t === '|' ? '<i></i>' : `<button class="${t[0] === '*' ? 'on' : ''}" aria-label="${t.replace('*', '')}"><ui-icon name="${t.replace('*', '')}"${/^server/.test(t) ? ' w="10" h="16"' : ''}></ui-icon></button>`).join(''));

define('tree-row', `
:host{display:flex;align-items:center;height:18px;padding-left:calc(var(--level,0) * 1px);white-space:nowrap}
.arrow{width:13px;display:flex;flex:none}
.label{display:flex;align-items:center;gap:var(--gap,5px);height:18px}
:host([selected]) .label{outline:1px solid #d9d9d9;outline-offset:-1px;background:#f2f2f2;padding:0 5px 0 2px;margin-left:-2px}`,
  el => {
    const a = el.getAttribute('arrow'), n = el.getAttribute('icon');
    return (a ? `<span class="arrow"><ui-icon name="${a}" w="8" h="${a === 'open' ? 8 : 10}"></ui-icon></span>` : '') +
      `<span class="label"><ui-icon name="${n}" w="${el.getAttribute('w') || 16}" h="16"></ui-icon><span><slot></slot></span></span>`;
  });

const MMC = `font:11px/16px "Noto Sans","Open Sans",sans-serif;color:#000`;
const TABLE = `
menu-bar{font-size:12px}
table{border-collapse:collapse;table-layout:fixed;white-space:nowrap}
th{font-weight:400;text-align:left;height:19px;padding:0 0 0 6px;background:#fcfcfc;border-bottom:1px solid #dedede;border-right:2px solid #e2e2e2}
td{height:19px;padding:0 0 0 6px;overflow:hidden}
td:first-child{padding-left:4px}
td div{display:flex;align-items:center;gap:2px}`;

/* ---------- IIS console on the 2012 guest ---------- */
define('iis-console', `
:host{display:flex;flex-direction:column;flex:1;min-height:0;background:#f0f0f0;${MMC}}
.band{height:23px;flex:none;background:#c2d6dc;padding:3px 2px}
menu-bar{height:23px;border-bottom:1px solid #b5b5b5;padding-left:2px}
menu-bar ui-icon{margin-right:-8px}
.panes{flex:1;min-height:0;display:flex;gap:3px;border-bottom:1px solid #f0f0f0}
.pane{border:1px solid #828790;background:#fff;overflow:hidden}
.tree{width:253px;flex:none;border-left:0;padding:1px 0 0 5px}
.list{flex:1;padding:1px}
.status{height:22px;flex:none;background:#fff;border-top:1px solid #a8a8a8;padding:4px 2px 2px}
${TABLE}
table{width:100%}`, `
<div class="band"><ui-icon name="iis"></ui-icon></div>
<menu-bar items="Archivo,Acción,Ver,Ventana,Ayuda"><ui-icon name="iis"></ui-icon></menu-bar>
<mmc-toolbar tools="left right | folderUp *treePane | refresh exportList | help actPane"></mmc-toolbar>
<div class="panes">
<div class="pane tree">
<tree-row icon="iisRoot">Internet Information Services</tree-row>
<tree-row icon="computer" arrow="open" style="--level:6">WINDOS2012SERVE (equipo local)</tree-row>
<tree-row icon="smtp" arrow="open" style="--level:25">[SMTP Virtual Server #1]</tree-row>
<tree-row icon="domains" selected style="--level:57">Dominios</tree-row>
<tree-row icon="user" style="--level:57">Sesiones actuales</tree-row>
</div>
<div class="pane list"><table><thead><tr><th>Nombre de dominio</th></tr></thead><tbody>
<tr><td><div><ui-icon name="domains"></ui-icon>WINDOS2012SERVER.DOMI</div></td></tr>
<tr><td><div><ui-icon name="domains"></ui-icon>server.edu</div></td></tr></tbody></table></div>
</div>
<div class="status">2 elementos</div>`);

/* ---------- DNS manager ---------- */
define('dns-manager', `
:host{display:flex;flex-direction:column;background:#65c9ea;border:1px solid #2d3a40;border-right:0;padding:0 5px 7px 7px;${MMC}}
header{display:flex;align-items:flex-start;height:30px;flex:none;margin-right:-3px}
header>ui-icon{margin:7px 0 0 5px}
h2{flex:1;margin:0;padding:2px 0 0 84px;text-align:center;font:14px/24px "Noto Sans","Open Sans",sans-serif}
.ctl{display:flex;height:21px;border:1px solid #2d3a40;border-top:0}
.ctl button{width:28px;display:flex;align-items:center;justify-content:center;border-right:1px solid #2d3a40}
.ctl .close{width:46px;background:#c35b50;border:0}
menu-bar{height:23px;background:#f0f0f0;border-bottom:1px solid #b5b5b5;padding-left:10px}
.panes{flex:1;min-height:0;display:flex;gap:4px;background:#f0f0f0}
.pane{border:1px solid #828790;background:#fff;overflow:hidden}
.tree{width:268px;flex:none;padding:1px 0 0 7px}
.list{flex:1;padding:1px}
.status{height:22px;flex:none;background:#fff;border:1px solid #c0c0c0;border-left:0;display:flex;justify-content:flex-end;padding:2px 0}
.status i{width:86px;border-left:1px solid #d2d2d2;border-right:1px solid #d2d2d2}
${TABLE}`, `
<header><ui-icon name="dns" w="12" h="16"></ui-icon><h2>Administrador de DNS</h2>
<div class="ctl"><button aria-label="Minimizar"><ui-icon name="wMin" w="12"></ui-icon></button><button aria-label="Maximizar"><ui-icon name="wMax" w="12"></ui-icon></button><button class="close" aria-label="Cerrar"><ui-icon name="cross" w="12" style="color:#000"></ui-icon></button></div></header>
<menu-bar items="Archivo,Acción,Ver,Ayuda"></menu-bar>
<mmc-toolbar tools="left right | folderUp *treePane | props refresh exportList | help actPane | serverGray record copies"></mmc-toolbar>
<div class="panes"><div class="pane tree">
<tree-row icon="dns" w="12" style="--gap:6px">DNS</tree-row>
<tree-row icon="server" w="10" arrow="open" style="--level:5;--gap:9px">WINDOS2012SERVE</tree-row>
<tree-row icon="logs" arrow="closed" style="--level:22">Registros globales</tree-row>
</div><div class="pane list"><table><colgroup><col style="width:195px"><col style="width:173px"><col style="width:209px"><col style="width:150px"></colgroup>
<thead><tr><th>Nombre</th><th>Tipo</th><th>Datos</th><th>Marca de tiempo</th></tr></thead><tbody>
<tr><td><div><ui-icon name="record"></ui-icon>(igual que la carpeta principal)</div></td><td>Inicio de autoridad (SOA)</td><td>[1], windos2012server.dominio1082...</td><td>static</td></tr>
<tr><td><div><ui-icon name="record"></ui-icon>(igual que la carpeta principal)</div></td><td>Servidor de nombres (NS)</td><td>windos2012server.dominio10820.no...</td><td>static</td></tr>
</tbody></table></div></div>
<div class="status"><i></i></div>`);

define('server-taskbar', `
:host{display:flex;height:41px;flex:none;background:#65c9ea;border:1px solid #4b5a60;border-left:0;font:11px/17px "Noto Sans","Open Sans",sans-serif;color:#0c1c24}
button{width:59px;display:flex;align-items:center;justify-content:center;margin-right:3px}
.start{width:51px;margin:0}
.on{background:#7ad0ed;border:solid #3a819b;border-width:0 1px}
.hot{background:#a0dff3;border:solid #3a819b;border-width:0 1px}
.tray{margin-left:auto;display:flex;align-items:center;gap:4px}
.clock{width:94px;text-align:center}`, `
<button class="start" aria-label="Inicio"><ui-icon name="winLogoThin" w="28"></ui-icon></button>
<button class="on" aria-label="Administrador del servidor"><ui-icon name="serverMgr" w="34"></ui-icon></button>
<button aria-label="PowerShell"><ui-icon name="powershell" w="30" h="28"></ui-icon></button>
<button aria-label="Explorador"><ui-icon name="explorerOld" w="32"></ui-icon></button>
<button aria-label="Firefox"><ui-icon name="ffNew" w="32"></ui-icon></button>
<button class="on" aria-label="IIS"><ui-icon name="iis" w="32"></ui-icon></button>
<button class="hot" aria-label="DNS"><ui-icon name="dns" w="24" h="32"></ui-icon></button>
<div class="tray"><ui-icon name="netOld"></ui-icon><ui-icon name="volOff"></ui-icon><div class="clock">9:05<br>19/01/2018</div></div>`);

/* ---------- Firefox Quantum on the Windows 10 guest ---------- */
define('quantum-browser', `
:host{display:flex;flex-direction:column;flex:1;min-height:0;background:#fff;font:11px/16px "Noto Sans","Open Sans",sans-serif;color:#0c0c0d}
.strip{display:flex;height:33px;flex:none;background:#20233f;border-bottom:1px solid #15172c}
.tab{width:224px;margin-bottom:-1px;background:#f9f9fa;border-top:2px solid #0a84ff;display:flex;align-items:center;justify-content:space-between;padding:0 10px 2px 9px}
.new{color:#b9bac5;padding:0 10px;display:flex;align-items:center}
.win{margin-left:auto;display:flex;align-items:center;gap:34px;padding:4px 17px 0 0;color:#fff}
.nav{display:flex;align-items:center;height:39px;flex:none;background:#f9f9fa;border-bottom:1px solid #e0e0e1;color:#4a4a4f}
.nav>button{width:32px;display:flex;align-items:center;justify-content:center}
.nav>.back{height:32px;border:1px solid #b6b6b7;border-radius:50%;background:#fff;margin-left:5px}
.url{display:flex;align-items:center;gap:9px;height:30px;width:605px;margin-left:90px;background:#fff;border:1px solid #b9b9ba;border-radius:2px;padding:0 6px 0 8px;color:#6a6a6e}
.url input{flex:1;font-size:13px;line-height:20px;padding-top:2px;-webkit-text-fill-color:transparent;background:linear-gradient(90deg,#98989b 30px,#0c0c0d 30px);-webkit-background-clip:text;background-clip:text}
.acts{display:flex;gap:12px}
.nav .lib{margin-left:auto}
.nav .menu{width:40px;border-left:1px solid #dcdcdd;height:32px;margin-left:2px}
.page{flex:1;min-height:0;position:relative;padding:21px 8px}
h1{margin:0;font:bold 32px/38px "Liberation Serif",serif;color:#000}
.ptr{position:absolute;left:3px;top:34px}
`, `
<div class="strip"><div class="tab"><span>IIS Windows Server</span><button aria-label="Cerrar pestaña"><ui-icon name="crossMid" w="12" style="color:#4a4a4f"></ui-icon></button></div>
<button class="new" aria-label="Nueva pestaña"><ui-icon name="plus" w="15"></ui-icon></button>
<div class="win"><button aria-label="Minimizar"><ui-icon name="lineThin" w="12"></ui-icon></button><button aria-label="Restaurar"><ui-icon name="restore" w="12"></ui-icon></button><button aria-label="Cerrar"><ui-icon name="crossThin" w="12"></ui-icon></button></div></div>
<div class="nav"><button class="back" aria-label="Atrás"><ui-icon name="fxBack"></ui-icon></button><button aria-label="Adelante"><ui-icon name="fxFwd" style="color:#b3b3b5"></ui-icon></button><button aria-label="Recargar"><ui-icon name="fxReload"></ui-icon></button><button aria-label="Inicio"><ui-icon name="fxHome"></ui-icon></button>
<div class="url"><ui-icon name="info"></ui-icon><input aria-label="Dirección" value="mail.server.edu"><div class="acts"><ui-icon name="dots"></ui-icon><ui-icon name="pocket"></ui-icon><ui-icon name="star"></ui-icon></div></div>
<button class="lib" aria-label="Catálogo"><ui-icon name="library"></ui-icon></button><button aria-label="Barra lateral"><ui-icon name="sidebar"></ui-icon></button><button class="menu" aria-label="Menú"><ui-icon name="burger" w="14"></ui-icon></button></div>
<div class="page"><h1>Página En Construcción.</h1><ui-icon class="ptr" name="cursor" w="12" h="19"></ui-icon></div>`);

define('win10-taskbar', `
:host{display:flex;height:40px;flex:none;background:#000206;font:11px/17px "Noto Sans","Open Sans",sans-serif;color:#fff}
button{width:48px;display:flex;align-items:center;justify-content:center}
input{width:320px;background:#333;padding:0 12px;font-size:14px}
input::placeholder{color:#989898;opacity:1}
.run{width:40px;margin:0 5px 0 6px;border-bottom:2px solid #76b9ed;padding-top:2px}
.on{background:#35363a;border-bottom:2px solid #76b9ed;padding-top:2px;margin-left:1px}
.tray{margin-left:auto;display:flex;align-items:center;gap:8px}
.clock{width:77px;text-align:center;border-right:1px solid #4a4b4e;margin-right:4px;height:40px;padding-top:2px}`, `
<button aria-label="Inicio"><ui-icon name="winLogo"></ui-icon></button><input aria-label="Buscar" placeholder="Buscar en la web y en Windows">
<button aria-label="Vista de tareas"><ui-icon name="taskView" w="20" h="14"></ui-icon></button>
<button class="run" aria-label="Edge"><ui-icon name="edge" w="20" h="22"></ui-icon></button>
<button aria-label="Explorador"><ui-icon name="explorer10" w="22" h="18"></ui-icon></button>
<button class="on" aria-label="Firefox"><ui-icon name="ffNew" w="22"></ui-icon></button>
<div class="tray"><ui-icon name="caret" w="14"></ui-icon><ui-icon name="netTray"></ui-icon><ui-icon name="volTray"></ui-icon><ui-icon name="notes"></ui-icon><div class="clock">9:05<br>19/01/2018</div></div>`);

/* ---------- host Firefox with the course page ---------- */
define('res-item', `
:host{display:block;line-height:21px;padding-bottom:5px}
ui-icon{vertical-align:-3px;margin-right:9px}
a{color:#0f8a80;text-decoration:none}`,
  el => `<ui-icon name="${el.getAttribute('icon')}" w="24" h="27"></ui-icon><a href="#"><slot></slot></a>`);

define('course-page', `
:host{display:block;flex:1;min-height:0;overflow:hidden;background:#fff;color:#000;font:14px/21px "DejaVu Serif",serif}
nav{height:44px;background:#132f42;padding:5px 33px}
nav button{width:43px;height:31px;border-radius:4px;background:linear-gradient(#fafafa,#e4e4e4);display:flex;flex-direction:column;gap:5px;align-items:center;justify-content:center}
nav i{width:19px;height:1px;background:#bcbcbc}
.body{margin-left:22px;border-left:1px solid #dcdcdc;height:100%;overflow:hidden}
h4{margin:0;font:bold 14px/22px "DejaVu Serif",serif;color:#699a0c}
.top{margin:-9px 45px 18px 108px}
.l1{margin:0 28px 0 150px}
.dots{height:11px;margin:21px 0 27px 12px;background:conic-gradient(#e0e0e0 25%,transparent 0) 0 0/4px 4px}
h3{margin:0 0 18px 54px;font:bold 26px/30px "DejaVu Serif",serif}
p{margin:0 2px 17px 60px;font:bold 14px/17px "DejaVu Serif",serif;white-space:nowrap}
p a{color:#0f8a80;text-decoration:none}
.h{margin-left:76px}
.l2{margin:12px 40px 0 117px}`, `
<nav><button aria-label="Menú"><i></i><i></i><i></i></button></nav>
<div class="body"><h4 class="top">Instalación de un panel de control para servicio de hosting web</h4>
<div class="l1"><res-item icon="globeDoc">Enlace acerca de posibles opciones software</res-item><res-item icon="globeDoc">Web de zpanel</res-item><res-item icon="globeDoc">Instalar zpanel en Ubuntu</res-item><res-item icon="globeDoc">Install zpanel for Ubuntu</res-item><res-item icon="pageDoc">Otros paneles de control gratuitos</res-item><res-item icon="handDoc">Informe Panel de Control Hosting Web</res-item></div>
<div class="dots"></div>
<h3>Tema 5</h3>
<p>Instalación y Administración de Servicios<br>de Transferencia de Ficheros (<a href="#">FTP</a>)</p>
<h4 class="h">Contenidos y Recursos</h4><div class="l2"><res-item icon="pdf">FTP</res-item></div>
<h4 class="h">Actividades</h4><div class="l2"><res-item icon="pdf">Práctica FTP Packet Tracer</res-item><res-item icon="pdf">Servidor FTP WINDOWS</res-item><res-item icon="globeDoc">Videotutorial Servicios FTP en Windows 2012 Server</res-item><res-item icon="globeDoc">Technet Microsoft FTP Server</res-item><res-item icon="globeDoc">Descarga de WInSCP</res-item><res-item icon="pageDoc">Instalación y Configuración</res-item></div></div>`);

define('host-firefox', `
:host{display:flex;flex-direction:column;border:1px solid #7d7d7d;border-right:0;background:#f2f1f0;overflow:hidden;font:14px/20px "Open Sans","Noto Sans",sans-serif;color:#3c3c3c}
header{display:flex;align-items:center;height:26px;flex:none;padding:0 0 2px 7px;background:linear-gradient(#ececec,#e0e0e0)}
h2{margin:0 0 0 179px;font:bold 15px/20px "DejaVu Sans",sans-serif;color:#a9a9a9;white-space:nowrap}
.tabs{display:flex;align-items:center;height:29px;flex:none;background:linear-gradient(#e0e0e0,#dcdcdc);white-space:nowrap;border-bottom:1px solid #9a9a9a}
.tab{display:flex;align-items:center;gap:5px;height:29px}
.tab span{overflow:hidden;-webkit-mask-image:linear-gradient(90deg,#000 80%,transparent);mask-image:linear-gradient(90deg,#000 80%,transparent)}
.t1{width:186px;padding-left:25px;flex:none}
.t1 span{width:154px;flex:none}
.t2{flex:1;background:#f2f1f0;border-top:1px solid #9a9a9a;min-width:0;margin-bottom:-1px}
.t2 span{width:156px;flex:none}
.curve{flex:none;margin-left:24px;margin-bottom:-1px}
.t2>button,.t1>button{color:#555}
.bar{display:flex;align-items:center;height:44px;flex:none;padding-left:5px}
.back{width:31px;height:31px;border:1px solid #b3b3b3;border-radius:50%;background:#f7f7f7;display:flex;align-items:center;justify-content:center;z-index:1}
.url{flex:1;height:24px;margin-left:-4px;border:1px solid #b9b9b9;border-right:0;background:#fff;display:flex;align-items:center;gap:5px;padding-left:10px;color:#8a8a8a}
.url i{width:1px;height:17px;background:#c9c9c9}
.url input{flex:1;font-size:15px;line-height:20px;-webkit-text-fill-color:transparent;background:linear-gradient(90deg,#8f8f8f 76px,#1c1c1c 76px,#1c1c1c 222px,#8f8f8f 222px,#8f8f8f 290px,#fff 336px);-webkit-background-clip:text;background-clip:text}
.marks{display:flex;align-items:center;height:31px;flex:none;padding:0 0 2px 7px;gap:6px;border-bottom:1px solid #ccc;white-space:nowrap;font-size:15px}
.marks ui-icon+button{margin-right:3px}
.edge{height:3px;flex:none;border-top:1px solid #8a8a8a;background:#f4f4f4}`, `
<header><ui-icon name="ffOld"></ui-icon><h2>Curso: [17/18] Servicios d</h2></header>
<div class="tabs"><div class="tab t1"><ui-icon name="moodle" w="16" h="12"></ui-icon><span>SRD17-18: Práctica Serv</span><button aria-label="Cerrar pestaña"><ui-icon name="xBold" w="10"></ui-icon></button></div>
<svg class="curve" width="24" height="29"><path d="M0 28.500C12 28.500 10 20 12 12S18 .5 24 .5V29H0z" fill="#f2f1f0"/><path d="M0 28.500C12 28.500 10 20 12 12S18 .5 24 .5" fill="none" stroke="#9a9a9a"/></svg>
<div class="tab t2"><ui-icon name="moodle" w="16" h="12"></ui-icon><span>Curso: [17/18] Servicios</span><button aria-label="Cerrar pestaña"><ui-icon name="xBold" w="10"></ui-icon></button></div></div>
<div class="bar"><button class="back" aria-label="Atrás"><ui-icon name="backBold"></ui-icon></button><div class="url"><ui-icon name="info" w="15"></ui-icon><i></i><input aria-label="Dirección" value="moodle26.iespuertodelacruz.es/course/view.php"></div></div>
<div class="marks"><ui-icon name="folderFf"></ui-icon><button>Más visitados</button><ui-icon name="moodle" w="16" h="12"></ui-icon><button>Curso: 2ASR-IMW: Im...</button><ui-icon name="globeGray" w="14"></ui-icon><button>IES Puerto</button></div>
<course-page></course-page><div class="edge"></div>`);

/* ---------- host panel ---------- */
define('task-item', `
:host{display:block;flex:none;width:151px}
button{width:147px;height:23px;display:flex;align-items:center;gap:3px;padding-left:2px;overflow:hidden}
:host([active]) button{background:linear-gradient(#858585,#a3a3a3);color:#f2f2f2}`,
  el => `<button><ui-icon name="${el.getAttribute('icon')}" w="18"></ui-icon><span><slot></slot></span></button>`);

define('host-panel', `
:host{display:flex;align-items:center;background:linear-gradient(#e6e6e6,#c4c4c4);border-bottom:1px solid #8e8e8e;font:15px/20px "Noto Sans","Open Sans",sans-serif;color:#111}
.start{width:48px;height:23px;display:flex;align-items:center;justify-content:center;background:linear-gradient(#86b3d9,#2d608f)}
.quick{display:flex;gap:6px;padding:0 7px 0 10px}
.pager{display:flex;height:20px;width:71px;background:#aeaaa5;margin-right:10px}
.pager svg{flex:none}
.tray{margin-left:auto;display:flex;align-items:center;gap:4px;padding-right:4px}
.time{margin:0 4px 0 10px;font-size:14px}
.net{margin-left:12px}`, `
<button class="start" aria-label="Menú"><ui-icon name="lubuntu" w="22"></ui-icon></button>
<div class="quick"><button aria-label="Archivos"><ui-icon name="fileMan" w="20" h="21"></ui-icon></button><button aria-label="Web"><ui-icon name="web" w="21"></ui-icon></button><button aria-label="Escritorio"><ui-icon name="deskIcon" w="22" h="21"></ui-icon></button></div>
<div class="pager"><svg width="36" height="20"><path d="M0 0h36v20H0z" fill="#8bb0d2"/><path d="M.5.5h8v19h-8zM8.500.5h26v19h-26z" fill="none" stroke="#fff"/><path d="M13 2h8v3h-8z" fill="#7a3c22"/><path d="M14.500 4.500h20v15h-20z" fill="#d3e1f0" stroke="#fff"/></svg></div>
<task-item icon="ffOld">Curso: [17/18] S...</task-item><task-item icon="term">[asir@pce01: ~/...</task-item><task-item icon="vbox">Oracle VM Virt...</task-item><task-item icon="vb2012">Windows 2012 ...</task-item><task-item icon="atom">instalacion_y_c...</task-item><task-item icon="folderBlue">instalacion_y_c...</task-item><task-item icon="vb10" active>Windows 10 (Te...</task-item>
<div class="tray"><ui-icon name="volHost" w="20" h="14"></ui-icon><ui-icon name="bolt" w="12" h="16"></ui-icon><ui-icon class="net" name="netHost" w="21"></ui-icon><span class="time">09:05</span><button aria-label="Apagar"><ui-icon name="power" w="17"></ui-icon></button></div>`);

/* ---------- desktop: windows float freely over the wallpaper ---------- */
define('host-desktop', `
:host{display:block;position:relative;width:100vw;height:100vh;overflow:hidden;background:#000}
.wall{position:absolute;inset:0;background:linear-gradient(90deg,transparent 230px,#5a2f12 240px,#e8d9c4 255px,#6b3a14 275px,#3a1d0a 422px,transparent 422px) 0 1053px/100% 4px no-repeat,linear-gradient(#0a0404 600px,#7c2d18 680px,#b4542c 740px,#6b1f12 765px,#e7c290 776px,#fff 790px,#8b5a2e 812px,#000 830px)}
.old{position:absolute;left:0;top:0;width:12px;height:577px;border:1px solid #8a8a8a;border-left:0;background:linear-gradient(#d7d7d7 79px,#f1f1f1 79px,#ebebeb 136px,#d5d5d5 136px)}
host-firefox{position:absolute;left:3px;top:2px;width:419px;bottom:26px}
.vm1{position:absolute;left:422px;right:0;top:0;bottom:24px}
.vm2{position:absolute;left:770px;right:124px;top:183px;bottom:58px;--edge:#5e5e5e;--title:#636363;--ctl:#7c7c7c}
dns-manager{position:absolute;left:425px;right:0;top:0;bottom:40px}
host-panel{position:absolute;left:0;right:0;bottom:0;height:24px}`, `
<div class="wall"></div><div class="old"></div>
<host-firefox></host-firefox>
<vm-window class="vm1" icon="vb2012" heading="Windows 2012 Server (Tema 6.) [Corriendo] - Oracle VM VirtualBox" status="hdd cd nets usb sharedOff display screens cpu mouseInt capture"><iis-console></iis-console><server-taskbar></server-taskbar><dns-manager></dns-manager></vm-window>
<vm-window class="vm2" active icon="vb10" heading="Windows 10 (Tema 6.) [Corriendo] - Oracle VM VirtualBox" status="hddBusy cdGray nets usb sharedOff display screens cpu mouseInt capture"><quantum-browser></quantum-browser><win10-taskbar></win10-taskbar></vm-window>
<host-panel></host-panel>`);
</script>
</body>
</html>
